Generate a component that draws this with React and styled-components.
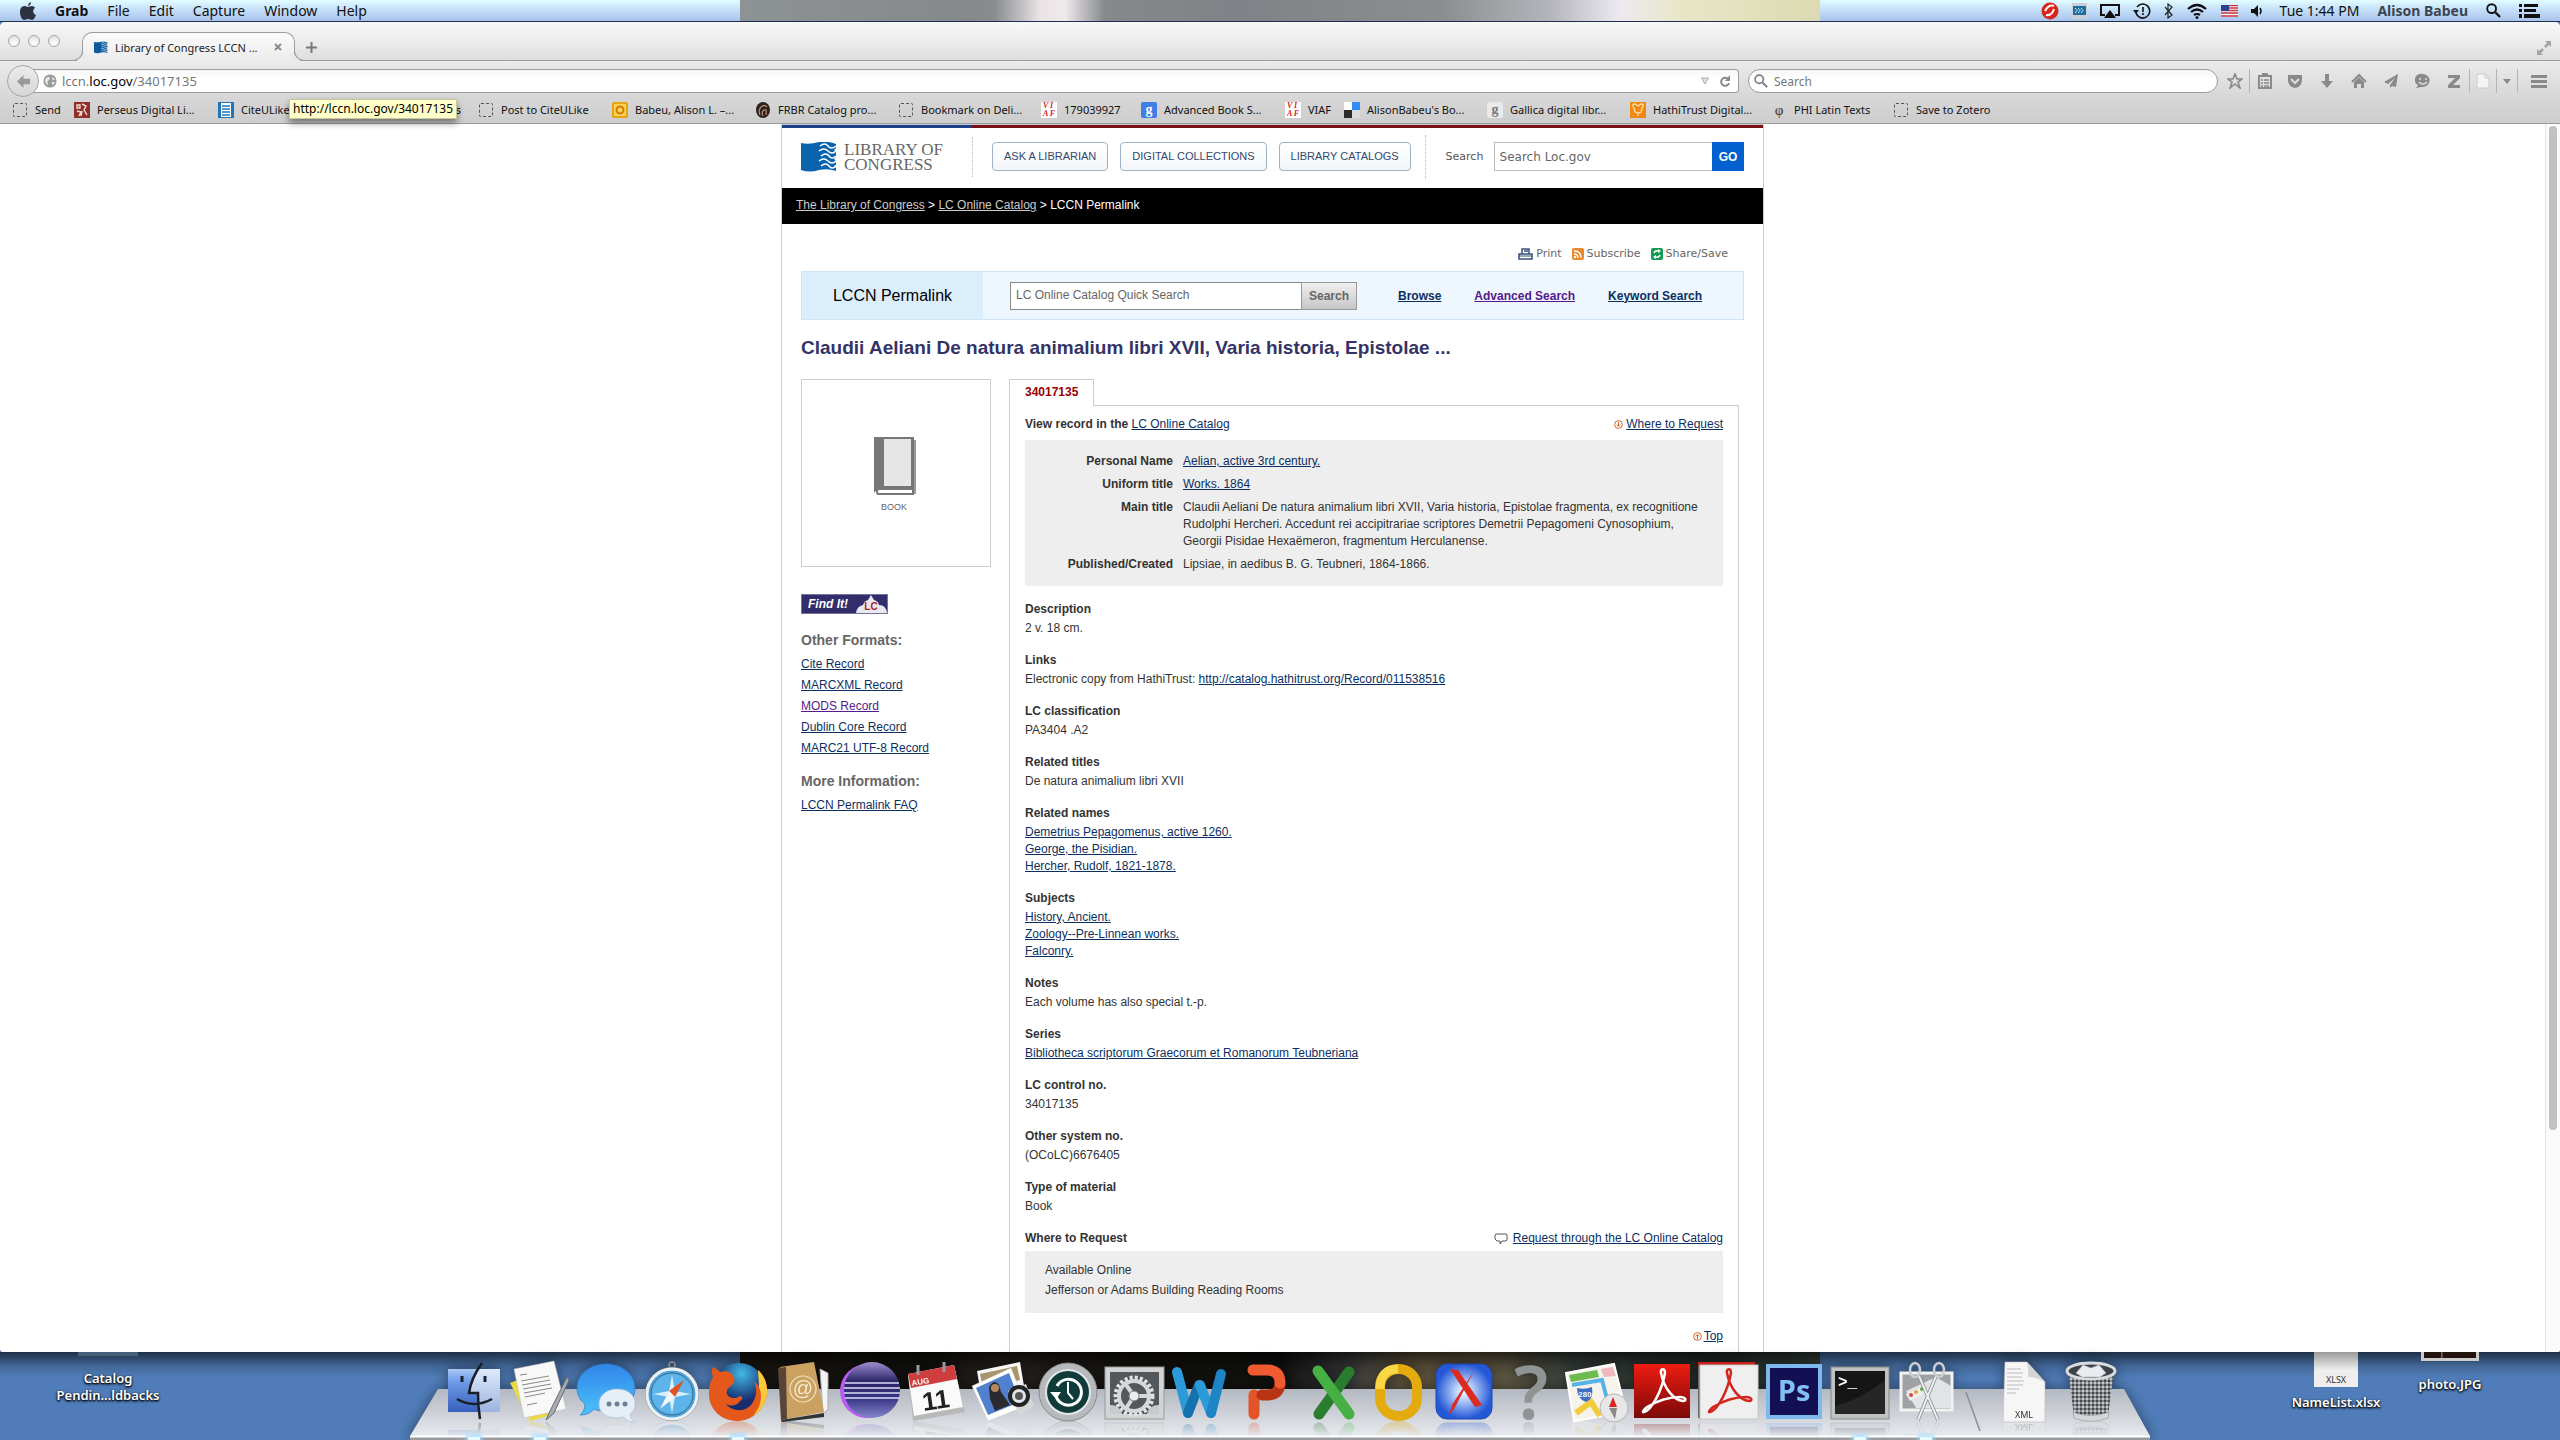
import React from "react";
import styled, { createGlobalStyle, css } from "styled-components";

const GlobalStyle = createGlobalStyle`
  *, *::before, *::after { box-sizing: border-box; }
  html, body, #root { margin: 0; padding: 0; height: 100%; }
  body { font-family: "Liberation Sans", Arial, sans-serif; font-size: 12px; color: #333; overflow: hidden; }
  button, input { font: inherit; }
  button { cursor: pointer; }
`;

const uiFont = `"Noto Sans", "Open Sans", sans-serif`;
const verdana = `"DejaVu Sans", Verdana, sans-serif`;

/* ---------- desktop ---------- */

const Screen = styled.div`
  display: flex;
  flex-direction: column;
  height: 100vh;
  background: #507db9;
`;

const MenuBar = styled.header`
  flex: none;
  display: flex;
  align-items: center;
  justify-content: space-between;
  height: 22px;
  padding: 0 20px;
  font-family: ${uiFont};
  font-size: 14px;
  line-height: 20px;
  color: #111;
  border-bottom: 1px solid #1d3050;
  background:
    linear-gradient(90deg, #8d9294 0, #85898b 230px, #8a8d90 255px, #e9e3e6 300px, #efe9ec 325px, #85898c 365px, #7f8387 500px, #8a8e90 700px, #b4b5bb 810px, #eceaf0 880px, #e9e6c8 940px, #dcdab2 1080px) center / 1080px 100% no-repeat,
    linear-gradient(#e2fdff, #c5e0fa 45%, #a9c3ea);
`;

const MenuGroup = styled.nav`
  display: flex;
  align-items: center;
  gap: ${(p) => p.$gap}px;
`;

const ClockGroup = styled.div`
  display: flex;
  align-items: center;
  gap: 18px;
  margin-left: 4px;
`;

const MenuItem = styled.button`
  border: 0;
  padding: 0;
  background: none;
  color: ${(p) => (p.$muted ? "#3b4650" : "#111")};
  font-weight: ${(p) => (p.$bold ? 700 : 400)};
  white-space: nowrap;
  display: flex;
  align-items: center;
`;

/* ---------- browser window ---------- */

const BrowserWindow = styled.main`
  flex: 1;
  min-height: 0;
  display: flex;
  flex-direction: column;
  background: #fff;
  border-radius: 5px 5px 3px 3px;
  overflow: hidden;
`;

const TabStrip = styled.div`
  flex: none;
  display: flex;
  align-items: flex-end;
  height: 39px;
  padding: 0 8px;
  background: linear-gradient(#f8f8f8, #ececec 50%, #dedede);
  border-bottom: 1px solid #9d9d9d;
`;

const Lights = styled.div`
  display: flex;
  gap: 8px;
  align-self: center;
  width: 74px;
`;

const Light = styled.button`
  width: 12px;
  height: 12px;
  padding: 0;
  border-radius: 50%;
  border: 1px solid #a8a8a8;
  background: radial-gradient(circle at 50% 80%, #fff, #dcdcdc);
`;

const Tab = styled.div`
  position: relative;
  display: flex;
  align-items: center;
  width: 213px;
  height: 29px;
  margin-bottom: -1px;
  padding: 0 12px 0 11px;
  gap: 7px;
  font-family: ${uiFont};
  font-size: 11px;
  color: #222;
  white-space: nowrap;
  background: linear-gradient(#fbfbfb, #ebebeb);
  border: 1px solid #9d9d9d;
  border-bottom: 0;
  border-radius: 10px 10px 0 0;
  &::before, &::after {
    content: "";
    position: absolute;
    bottom: 0;
    width: 10px;
    height: 10px;
    border-bottom: 1px solid #9d9d9d;
  }
  &::before { left: -10px; border-right: 1px solid #9d9d9d; border-bottom-right-radius: 10px; box-shadow: 4px 3px 0 #ebebeb; }
  &::after { right: -10px; border-left: 1px solid #9d9d9d; border-bottom-left-radius: 10px; box-shadow: -4px 3px 0 #ebebeb; }
`;

const GlyphButton = styled.button`
  display: flex;
  align-items: center;
  justify-content: center;
  flex: none;
  width: ${(p) => p.$w}px;
  height: 24px;
  padding: 0;
  border: 0;
  background: none;
  color: #8a8a8a;
  ${(p) => p.$line && css`border-left: 1px solid #b4b4b4;`}
  ${(p) => p.$push && css`margin-left: auto;`}
`;

const NewTab = styled(GlyphButton)`
  margin: 0 0 1px 10px;
`;

const Chrome = styled.div`
  flex: none;
  background: linear-gradient(#ebebeb, #d8d8d8 55%, #cdcdcd);
  border-bottom: 1px solid #9b9b9b;
`;

const NavRow = styled.div`
  display: flex;
  align-items: center;
  height: 40px;
  padding: 0 0 0 7px;
  font-family: ${uiFont};
`;

const BackButton = styled.button`
  position: relative;
  flex: none;
  display: flex;
  align-items: center;
  justify-content: center;
  width: 32px;
  height: 32px;
  margin-right: -8px;
  padding: 0;
  border-radius: 50%;
  border: 1px solid #a6a6a6;
  background: linear-gradient(#ececec, #d6d6d6);
  color: #9a9a9a;
  z-index: 1;
`;

const UrlField = styled.div`
  flex: 1;
  display: flex;
  align-items: center;
  height: 24px;
  padding: 0 6px 0 12px;
  gap: 5px;
  border: 1px solid #9c9c9c;
  border-left: 0;
  border-radius: 0 4px 4px 0;
  background: linear-gradient(#f6f6f6, #fff 40%);
  font-size: 13px;
  color: #777;
  b { font-weight: 400; color: #000; }
`;

const FlexText = styled.div`
  flex: 1;
`;

const SearchField = styled.label`
  display: flex;
  align-items: center;
  width: 470px;
  height: 24px;
  margin-left: 9px;
  padding: 0 8px 0 5px;
  gap: 6px;
  border: 1px solid #9c9c9c;
  border-radius: 12px;
  background: linear-gradient(#f6f6f6, #fff 40%);
  color: #808080;
  input {
    flex: 1;
    min-width: 0;
    border: 0;
    outline: 0;
    padding: 0;
    background: none;
    font-size: 12px;
  }
  input::placeholder { color: #777; opacity: 1; }
`;

const ToolSet = styled.div`
  display: flex;
  justify-content: flex-end;
  width: 342px;
`;

const Bookmarks = styled.nav`
  position: relative;
  display: flex;
  align-items: center;
  height: 22px;
  padding: 0 0 5px 12px;
  font-family: ${uiFont};
  font-size: 11px;
  line-height: 16px;
`;

const Bookmark = styled.a`
  flex: none;
  display: flex;
  align-items: center;
  gap: 7px;
  width: ${(p) => p.$w}px;
  color: #111;
  text-decoration: none;
  white-space: nowrap;
  ${(p) => p.$tail && css`justify-content: flex-end; padding-right: 17px;`}
`;

const Tooltip = styled.div`
  position: absolute;
  left: 289px;
  top: -2px;
  height: 20px;
  padding: 1px 3px;
  font-size: 12px;
  color: #000;
  background: #ffffc9;
  border: 1px solid #c9c79a;
  box-shadow: 0 4px 7px rgba(0, 0, 0, 0.45);
`;

const Dashed = styled.span`
  flex: none;
  width: 14px;
  height: 14px;
  margin: 0 1px;
  border: 1px dashed #555;
  border-radius: 2px;
`;

const Favicon = styled.span`
  flex: none;
  display: flex;
  align-items: center;
  justify-content: center;
  width: 16px;
  height: 16px;
  font: ${(p) => p.$font || "700 12px 'Liberation Serif', serif"};
  color: ${(p) => p.$fg || "#fff"};
  background: ${(p) => p.$bg || "transparent"};
  border-radius: ${(p) => p.$r || 0}px;
`;

const Viewport = styled.div`
  flex: 1;
  min-height: 0;
  display: flex;
`;

const PageArea = styled.div`
  flex: 1;
  overflow: hidden;
  display: flex;
  justify-content: center;
`;

const ScrollTrack = styled.div`
  flex: none;
  width: 15px;
  padding: 2px 3px;
  background: #fafafa;
  border-left: 1px solid #e4e4e4;
`;

const ScrollThumb = styled.div`
  height: 82%;
  border-radius: 4px;
  background: #c1c1c1;
`;

/* ---------- library page ---------- */

const Page = styled.div`
  width: 983px;
  border: solid #ccc;
  border-width: 0 1px;
`;

const FlagBar = styled.div`
  height: 4px;
  border-top: 1px solid #c3cbdb;
  background: linear-gradient(90deg, #1c3f86 190px, #7b1014 190px);
`;

const SiteHeader = styled.header`
  display: flex;
  align-items: center;
  height: 60px;
  padding: 0 19px 3px;
`;

const Logo = styled.a`
  display: flex;
  align-items: center;
  gap: 7px;
  width: 172px;
  height: 40px;
  border-right: 1px dotted #bbb;
  color: #666;
  text-decoration: none;
  white-space: nowrap;
  font: 17px/15px "Liberation Serif", serif;
`;

const HeaderButtons = styled.div`
  display: flex;
  gap: 12px;
  align-items: center;
  height: 44px;
  padding: 0 14px 0 19px;
  border-right: 1px dotted #bbb;
`;

const HeaderButton = styled.button`
  height: 29px;
  padding: 0 11px 2px;
  border: 1px solid #9fb0c8;
  border-radius: 4px;
  background: linear-gradient(#fff, #f3f6fa);
  color: #33496b;
  font-size: 11px;
  white-space: nowrap;
`;

const LocSearch = styled.form`
  flex: 1;
  display: flex;
  align-items: center;
  margin-left: 20px;
  font-family: ${verdana};
  font-size: 11px;
  color: #555;
  label { width: 48px; }
`;

const LocInput = styled.input`
  flex: 1;
  min-width: 0;
  height: 29px;
  padding: 0 5px;
  border: 1px solid #bbb;
  border-right: 0;
  font-size: 12px;
  &::placeholder { color: #666; opacity: 1; }
`;

const GoButton = styled.button`
  width: 32px;
  height: 29px;
  padding: 0;
  border: 0;
  background: #0060cf;
  color: #fff;
  font: 700 12px "Liberation Sans", sans-serif;
`;

const Crumbs = styled.nav`
  height: 36px;
  padding: 0 14px;
  background: #000;
  color: #fff;
  line-height: 35px;
  a { color: #ccc; }
`;

const UtilityRow = styled.div`
  display: flex;
  justify-content: flex-end;
  align-items: center;
  gap: 10px;
  height: 47px;
  padding: 12px 35px 0 0;
  font-family: ${verdana};
  font-size: 11px;
`;

const UtilityLink = styled.a`
  display: flex;
  align-items: center;
  gap: 3px;
  color: #666;
  text-decoration: none;
`;

const CatalogBar = styled.div`
  display: flex;
  align-items: center;
  height: 49px;
  margin: 0 19px;
  border: 1px solid #cfe5f6;
  background: #eef6ff;
`;

const CatalogName = styled.div`
  display: flex;
  align-items: center;
  justify-content: center;
  width: 181px;
  height: 100%;
  background: #dbeefc;
  color: #000;
  font-size: 16px;
`;

const QuickSearch = styled.form`
  display: flex;
  margin: 0 41px 0 27px;
`;

const QuickInput = styled.input`
  width: 292px;
  height: 28px;
  padding: 0 5px 2px;
  border: 1px solid #888;
  background: #fff;
  &::placeholder { color: #666; opacity: 1; }
`;

const QuickButton = styled.button`
  width: 56px;
  height: 28px;
  margin-left: -1px;
  padding: 0;
  border: 1px solid #999;
  background: linear-gradient(#f0f0f0, #c6c6c6);
  color: #666;
  font-weight: 700;
`;

const CatalogLinks = styled.div`
  display: flex;
  gap: 33px;
  font-weight: 700;
`;

const Link = styled.a`
  color: ${(p) => (p.$visited ? "#551a8b" : "#0b2f5f")};
  white-space: nowrap;
`;

const Title = styled.h1`
  margin: 16px 19px 19px;
  font-size: 19px;
  line-height: 24px;
  color: #333366;
`;

const Columns = styled.div`
  display: flex;
  align-items: flex-start;
  gap: 18px;
  margin: 0 24px 0 19px;
`;

const Side = styled.aside`
  width: 190px;
`;

const Cover = styled.div`
  display: flex;
  flex-direction: column;
  align-items: center;
  justify-content: center;
  gap: 5px;
  height: 188px;
  padding: 2px 4px 0 0;
  border: 1px solid #ccc;
  font-size: 9px;
  line-height: 12px;
  color: #666;
`;

const FindIt = styled.button`
  display: flex;
  justify-content: space-between;
  align-items: flex-end;
  width: 87px;
  height: 20px;
  margin: 27px 0 17px;
  padding: 0 0 0 6px;
  border: 1px solid #77739a;
  background: #312e6b;
  color: #fff;
  font: italic 700 12px/17px "Liberation Sans", sans-serif;
  white-space: nowrap;
`;

const SideTitle = styled.h2`
  margin: 0 0 5px;
  font-size: 14px;
  line-height: 18px;
  color: #666;
`;

const SideList = styled.ul`
  list-style: none;
  margin: 0 0 13px;
  padding: 0;
  line-height: 21px;
`;

const Record = styled.section`
  flex: 1;
  line-height: 17px;
`;

const RecordTab = styled.div`
  position: relative;
  width: 85px;
  height: 27px;
  margin-bottom: -1px;
  padding-left: 15px;
  border: 1px solid #ccc;
  border-bottom: 0;
  background: #fff;
  color: #900;
  font-weight: 700;
  line-height: 24px;
`;

const Panel = styled.div`
  min-height: 1200px;
  padding: 10px 15px;
  border: 1px solid #ccc;
`;

const Split = styled.div`
  display: flex;
  justify-content: space-between;
`;

const IconText = styled.span`
  display: flex;
  align-items: center;
  gap: ${(p) => p.$gap}px;
`;

const Summary = styled.dl`
  display: grid;
  grid-template-columns: 148px 1fr;
  gap: 6px 10px;
  margin: 7px 0 15px;
  padding: 13px 10px 13px 0;
  background: #eee;
  dt { font-weight: 700; text-align: right; }
  dd { margin: 0; }
`;

const Field = styled.div`
  margin-bottom: 15px;
  h3 { margin: 0 0 2px; font-size: 12px; }
`;

const Holdings = styled.div`
  margin: 4px 0 15px;
  padding: 9px 20px 13px;
  background: #eee;
  line-height: 20px;
`;

const TopLink = styled.div`
  display: flex;
  justify-content: flex-end;
`;

/* ---------- dock ---------- */

const Desk = styled.footer`
  position: relative;
  flex: none;
  display: flex;
  justify-content: center;
  align-items: flex-end;
  height: 88px;
  background:
    linear-gradient(rgba(0, 0, 0, 0.62), rgba(0, 0, 0, 0.18) 14px, transparent 26px),
    linear-gradient(90deg, #1b1813, #12110f 180px, #26231e 260px, #14120f 420px, #11110f 540px, #3a3c3e 610px, #5f553f 660px, #6b5d44 740px, #3b443f 830px, #27302c 960px, #3c4a42 1080px) center / 1080px 100% no-repeat,
    #507db9;
`;

const Dock = styled.div`
  position: relative;
  display: flex;
  justify-content: center;
  width: 1740px;
  height: 80px;
  padding-left: 5px;
  filter: drop-shadow(0 0 7px rgba(0, 0, 0, 0.45));
  &::before {
    content: "";
    position: absolute;
    inset: 29px 0 0 0;
    clip-path: polygon(28px 0, calc(100% - 26px) 0, 100% 47px, 100% 100%, 0 100%, 0 47px);
    background: linear-gradient(#b3b8c1, #c9ccd2 20px, #e6e9ee 46px, #fff 47px, #fff 48px, #989a9d 49px);
  }
`;

const DockItem = styled.button`
  position: relative;
  display: flex;
  width: 66px;
  height: 80px;
  padding: 1px 3px 0;
  border: 0;
  background: none;
  svg {
    width: 60px;
    height: 60px;
    overflow: visible;
    -webkit-box-reflect: below 0 linear-gradient(transparent 74%, rgba(0, 0, 0, 0.32));
  }
  ${(p) => p.$running && css`
    &::after {
      content: "";
      position: absolute;
      left: 27px;
      bottom: 0;
      width: 12px;
      height: 3px;
      background: #e9fbff;
      box-shadow: 0 0 4px 2px #9fdcff;
    }
  `}
`;

const DockDivider = styled.div`
  position: relative;
  width: 33px;
  height: 80px;
  padding: 32px 0 0 6px;
`;

const DeskFile = styled.a`
  position: absolute;
  top: 0;
  ${(p) => p.$side}: ${(p) => p.$at}px;
  display: flex;
  flex-direction: column;
  align-items: center;
  width: 120px;
  gap: ${(p) => p.$gap}px;
  color: #fff;
  font: 600 13px/17px ${uiFont};
  text-align: center;
  text-decoration: none;
  text-shadow: 0 1px 3px #000, 0 1px 2px #000;
`;

const FolderEdge = styled.span`
  width: 60px;
  height: 5px;
  background: #47607a;
  border-bottom: 1px solid #2e4157;
`;

const SheetEdge = styled.span`
  width: 44px;
  height: 35px;
  padding-top: 21px;
  background: linear-gradient(#9a9a9a, #eee 18px);
  color: #333;
  font: 9px/14px ${uiFont};
  text-shadow: none;
`;

const PhotoEdge = styled.span`
  width: 58px;
  height: 9px;
  border: solid #ccc;
  border-width: 0 3px 3px;
  background: linear-gradient(90deg, #22130e 32%, #877 34%, #22130e 37%);
`;

/* ---------- drawings ---------- */

const S = ({ s = 16, w, h, vb = "0 0 16 16", children, ...r }) => (
  <svg width={w || s} height={h || s} viewBox={vb} fill="none" aria-hidden="true" {...r}>{children}</svg>
);

const Wave = ({ w = 14, h = 13, c = "#0b5a9d" }) => (
  <S w={w} h={h} vb="0 0 36 30">
    <path d="M0 1q8 2 18-1q10-1 17 2v27q-8-3-17-1q-9 3-18 0z" fill={c} />
    <path d="M19 4q5-4 8 0t8 0M18 9q5-4 9 0t8 0M20 14q5-4 8 0t7 0M18 19q5-4 9 0t8 0M20 24q5-4 8 0t7 0" stroke="#fff" strokeWidth="1.5" />
    <path d="M36 5l-3 3 3 3M36 14l-3 3 3 3M36 22l-3 2 3 3" fill="#fff" />
  </S>
);

const Apple = () => (
  <S w={16} h={18} vb="0 0 16 18">
    <path d="M11 0q0 3-3 4q0-3 3-4zM8 5c1 0 2-1 4-1 1 0 3 1 3 2-3 2-2 6 1 7-1 3-3 5-4 5s-2-1-4-1-2 1-4 1C2 18 0 14 0 10s2-6 5-6c1 0 2 1 3 1z" fill="#2c3240" />
  </S>
);

const Magnifier = ({ s = 14 }) => (
  <S s={s}><circle cx="6" cy="6" r="4.7" stroke="currentColor" strokeWidth="2" /><path d="M10 10l5 5" stroke="currentColor" strokeWidth="2.4" /></S>
);

const Viaf = () => (
  <Favicon $bg="#fff" $fg="#d3222a" $font="italic 700 8px/8px 'Liberation Serif', serif"><span>V I<br />A F</span></Favicon>
);

const bookmarkIcons = {
  dash: <Dashed />,
  perseus: <Favicon $bg="#8f2f2b"><S><path d="M3 3h3v3H3zM8 2l4 2-2 4 3 5M3 9l4 1-2 4M8 9l-1 5" stroke="#f3dcd4" strokeWidth="1.4" /></S></Favicon>,
  cite: <Favicon $bg="#1f75bb"><S><path d="M3 1h10v14H3z" fill="#fff" /><path d="M4 4h8M4 7h8M4 10h8M4 13h8" stroke="#1f75bb" strokeWidth="1.3" /></S></Favicon>,
  owa: <Favicon $bg="#e9a40c" $r={2}><S><rect x="2" y="2" width="12" height="12" fill="#fbd25a" /><circle cx="8" cy="8" r="3.5" stroke="#d07c00" strokeWidth="2" /></S></Favicon>,
  frbr: <S><ellipse cx="8" cy="8" rx="7" ry="8" fill="#2d211b" /><path d="M5 13q-2-5 1-8t6 0M8 14q-2-4 1-6t2 5" stroke="#b08a70" strokeWidth="1.3" /></S>,
  viaf: <Viaf />,
  goog: <Favicon $bg="#3f7de8" $r={2} $font="700 14px/12px 'Liberation Serif', serif">g</Favicon>,
  del: <S><path d="M0 0h8v8H0z" fill="#fff" /><path d="M8 0h8v8H8z" fill="#2f8ef5" /><path d="M0 8h8v8H0z" fill="#2b2b2b" /><path d="M8 8h8v8H8z" fill="#ddd" /></S>,
  gal: <Favicon $bg="#e8eaec" $fg="#777" $r={3} $font="700 14px/12px 'Liberation Serif', serif">g</Favicon>,
  hathi: <Favicon $bg="#f08a12"><S><path d="M4 6q-3-4 1-4l3 2 3-2q4 0 1 4l-1 4-3 1-3-1zM8 11v3" stroke="#ffe0a8" strokeWidth="1.3" /></S></Favicon>,
  phi: <Favicon $fg="#333" $font="15px/14px 'Liberation Serif', serif">φ</Favicon>,
};

const bookmarks = [
  ["dash", "Send", 62],
  ["perseus", "Perseus Digital Li...", 144],
  ["cite", "CiteULike", 94],
  [null, "s", 166],
  ["dash", "Post to CiteULike", 134],
  ["owa", "Babeu, Alison L. –...", 143],
  ["frbr", "FRBR Catalog pro...", 143],
  ["dash", "Bookmark on Deli...", 143],
  ["viaf", "179039927", 100],
  ["goog", "Advanced Book S...", 144],
  ["viaf", "VIAF", 59],
  ["del", "AlisonBabeu's Bo...", 143],
  ["gal", "Gallica digital libr...", 143],
  ["hathi", "HathiTrust Digital...", 141],
  ["phi", "PHI Latin Texts", 122],
  ["dash", "Save to Zotero", 110],
];

const tools = [
  ["Bookmark this page", 28, false, <S><path d="M8 1l2 5h5l-4 3 2 6-5-4-5 4 2-6-4-3h5z" stroke="currentColor" strokeWidth="1.6" /></S>],
  ["Show bookmarks", 30, true, <S><path d="M2 3h12v12H2z" stroke="currentColor" strokeWidth="2" /><path d="M5 0h6v4H5z" fill="currentColor" /><path d="M4 7h2M7 7h5M4 10h2M7 10h5M4 13h2M7 13h5" stroke="currentColor" strokeWidth="1.3" /></S>],
  ["Pocket", 32, false, <S><path d="M1 2h14v6q-1 6-7 7-6-1-7-7z" fill="currentColor" /><path d="M4 6l4 4 4-4" stroke="#ddd" strokeWidth="2" /></S>],
  ["Downloads", 32, false, <S><path d="M6 1h4v7h4l-6 7-6-7h4z" fill="currentColor" /></S>],
  ["Home", 32, false, <S><path d="M1 9l7-7 7 7" stroke="currentColor" strokeWidth="2" /><path d="M3 9l5-5 5 5v6h-3v-4H6v4H3z" fill="currentColor" /></S>],
  ["Share", 32, false, <S><path d="M15 1L1 9l4 2 7-6-5 7v3l2-2 4 1z" fill="currentColor" /></S>],
  ["Hello", 32, false, <S><path d="M8 1a7 6 0 1 1-2 13l-5 1 2-3a7 6 0 0 1 5-11z" fill="currentColor" /><path d="M5 5v2M11 5v2M4 9q4 4 8 0" stroke="#ddd" strokeWidth="1.5" /></S>],
  ["Zotero", 30, false, <S><path d="M2 2h12v3L7 12h7v3H2v-3l7-7H2z" fill="currentColor" /></S>],
  ["Save page", 27, true, <S><path d="M2 1h8l4 4v10H2z" fill="#f4f4f4" stroke="#ccc" /><path d="M10 1v4h4" stroke="#ccc" /></S>],
  ["Save options", 21, true, <S s={8} vb="0 0 8 8"><path d="M0 2h8L4 7z" fill="currentColor" /></S>],
  ["Open menu", 43, true, <S><path d="M0 2h16v3H0zM0 7h16v3H0zM0 12h16v3H0z" fill="currentColor" /></S>],
];

const statusIcons = [
  <S s={18} vb="0 0 18 18"><circle cx="9" cy="9" r="8.5" fill="#d8261c" /><path d="M4 9q4-7 9-5M5 13q6 1 8-6" stroke="#fff" strokeWidth="2" /></S>,
  <S w={15} h={16} vb="0 0 15 16"><rect width="15" height="16" fill="#c8d0d6" /><rect x="1" y="3" width="13" height="9" fill="#1e6c9e" /><path d="M3 5l2 2.5L3 10M6 5l2 2.5L6 10M9 5l2 2.5L9 10" stroke="#bfe4ff" /></S>,
  <S w={20} h={16} vb="0 0 20 16"><path d="M5 12H1V2h18v10h-4" stroke="#111" strokeWidth="2" /><path d="M10 7l6 8H4z" fill="#111" /></S>,
  <S s={18} vb="0 0 18 18"><path d="M4 5a7 7 0 1 1-1 6" stroke="#111" strokeWidth="1.6" /><path d="M0 8h6l-3 4z" fill="#111" /><path d="M10 5v5M10 11v2" stroke="#111" strokeWidth="1.6" /></S>,
  <S w={9} h={16} vb="0 0 9 16"><path d="M1 4l7 8-4 3V1l4 3-7 8" stroke="#222" strokeWidth="1.2" /></S>,
  <S w={22} h={16} vb="0 0 22 16"><path d="M2 6q9-8 18 0M5 9q6-5 12 0M8 12q3-2 6 0" stroke="#111" strokeWidth="2.2" /><circle cx="11" cy="14.5" r="1.5" fill="#111" /></S>,
  <S w={17} h={12} vb="0 0 17 12"><rect width="17" height="12" fill="#fff" /><path d="M0 .5h17M0 3h17M0 5.5h17M0 8h17M0 11h17" stroke="#c4303a" strokeWidth="1.3" /><rect width="8" height="6" fill="#31408c" /></S>,
  <S w={12} h={12} vb="0 0 12 12"><path d="M0 4h3l4-4v12L3 8H0z" fill="#111" /><path d="M9 3q2 3 0 6" stroke="#111" strokeWidth="1.5" /></S>,
];

const CircleArrow = ({ up }) => (
  <S w={9} h={9} vb="0 0 10 10"><circle cx="5" cy="5" r="4.3" stroke="#c8581e" /><path d={up ? "M5 8V3M3 5l2-2 2 2" : "M5 2v5M3 5l2 2 2-2"} stroke="#c8581e" /></S>
);

const swirl = "M12 51c8-2 18-22 21-39 0-5-5-5-4 0 3 16 13 27 22 28 4 0 3-4-3-4-12 0-23 4-33 10-4 3-5 6-3 5z";

const dockApps = [
  ["Finder", true, <>
    <defs><linearGradient id="fi" x2="0" y2="1"><stop stopColor="#a9c8f7" /><stop offset=".3" stopColor="#6f9ae6" /><stop offset="1" stopColor="#3560bd" /></linearGradient><linearGradient id="fr" x2="0" y2="1"><stop stopColor="#dfe9fb" /><stop offset="1" stopColor="#9db4e0" /></linearGradient></defs>
    <rect x="4" y="8" width="52" height="43" fill="url(#fr)" /><path d="M4 8h32q-9 13-10 24h9v19H4z" fill="url(#fi)" />
    <path d="M18 15v6M41 15v6" stroke="#152238" strokeWidth="3" /><path d="M38 2q-11 15-13 30h9q0 14 2 26M13 38q17 10 35 0" stroke="#1b2026" strokeWidth="2.5" /></>],
  ["TextEdit", true, <>
    <path d="M0 22l20 38 20-6L10 18z" fill="#ecd93c" /><path d="M4 8l40-8 12 48-42 9z" fill="#f8f8f8" stroke="#bbb" strokeWidth=".5" />
    <path d="M10 14l7-1M11 20l28-5M12 24l28-5M13 28l28-5M14 32l28-5M15 36l20-4M17 44l10-2" stroke="#888" /><path d="M57 16L40 50l-4 9 8-7 15-33z" fill="#a9adb2" stroke="#66696d" /></>],
  ["Messages", false, <>
    <defs><linearGradient id="ms" x2="0" y2="1"><stop stopColor="#2f86e8" /><stop offset="1" stopColor="#4cc2fb" /></linearGradient></defs>
    <path d="M30 3c16 0 29 10 29 24S46 50 30 50c-5 0-8 0-12-2q-5 6-14 6 5-4 5-11C4 39 1 34 1 27 1 13 14 3 30 3z" fill="url(#ms)" stroke="#2a74c4" strokeWidth=".7" />
    <path d="M41 28c11 0 18 6 18 15 0 5-2 8-5 10 0 4 2 6 5 8-6 0-9-2-11-5-16 3-25-3-25-13 0-9 8-15 18-15z" fill="#e6eff8" stroke="#a9bccd" strokeWidth=".6" /><g fill="#6d7f90"><circle cx="33" cy="43" r="2.5" /><circle cx="41" cy="43" r="2.5" /><circle cx="49" cy="43" r="2.5" /></g></>],
  ["Safari", false, <>
    <circle cx="30" cy="4" r="3" stroke="#888" strokeWidth="1.5" /><circle cx="30" cy="33" r="27" fill="#8a9097" /><circle cx="30" cy="33" r="25" stroke="#eef0f2" strokeWidth="3" fill="#4aa5e0" /><circle cx="30" cy="33" r="21" fill="#5db4ea" stroke="#406880" />
    <path d="M30 14l3 16 16 3-16 3-3 16-3-16-16-3 16-3z" fill="#d9eefb" /><path d="M42 19L33 36l-6-6z" fill="#e2521f" /><path d="M18 48l9-18 6 6z" fill="#f4f8fb" /></>],
  ["Firefox", true, <>
    <defs><radialGradient id="ff" cx=".55" cy=".2"><stop stopColor="#43b9e6" /><stop offset="1" stopColor="#152d6e" /></radialGradient></defs>
    <circle cx="31" cy="29" r="27" fill="url(#ff)" /><path d="M50 9c9 8 12 22 6 34-5 10-15 17-27 17C12 60 0 47 1 31 1 22 4 19 5 15 3 12 4 8 5 6c3 1 5 3 7 5 5-2 12 0 13 4 3 4 1 8-2 10-3 2-5 4-4 8 2 5 9 5 13 2 3 0 3 4 0 5-4 6-11 5-14 3 6 8 21 9 27-2 4-7 4-15 1-20 3 1 4 3 5 5 1-6 0-12-1-17z" fill="#e4591b" /><path d="M50 9c9 8 12 22 6 34-2 4-6 9-11 12 8-9 10-20 6-29 0-7-1-12-1-17z" fill="#fbc93a" /></>],
  ["Contacts", false, <>
    <path d="M46 8l8 4v36l-5 5z" fill="#f4f4f4" stroke="#aaa" /><path d="M6 6l34-5 10 50-43 8z" fill="#caa161" /><path d="M4 7l8-1 1 52-6 1z" fill="#5a4438" /><path d="M7 59l43-7v4L8 61z" fill="#333" /><circle cx="29" cy="28" r="13" stroke="#f1e1bd" strokeWidth="1.2" /><text x="29" y="34" fontFamily="Liberation Sans" fontSize="20" fill="#f6ead0" textAnchor="middle">@</text></>],
  ["Eclipse", false, <>
    <defs><linearGradient id="ec" x2="0" y2="1"><stop stopColor="#9d8ed0" /><stop offset=".35" stopColor="#2b2468" /><stop offset=".65" stopColor="#3a3585" /><stop offset="1" stopColor="#8486cc" /></linearGradient></defs>
    <circle cx="27" cy="30" r="27" fill="#b95cf0" /><circle cx="32" cy="29" r="28" fill="url(#ec)" /><path d="M5 22h54M4 27h56M4 32h56M5 37h54" stroke="#dfe0f6" strokeWidth="1.3" /></>],
  ["Calendar", false, <>
    <path d="M2 14l46-9 11 46-52 9z" fill="#b8b8b8" /><path d="M2 13l46-9 9 42-49 9z" fill="#fafafa" /><path d="M2 13l46-9 3 14-46 9z" fill="#cf3e3e" /><path d="M12 4v10M38 1v10" stroke="#999" strokeWidth="3" />
    <text x="6" y="25" transform="rotate(-10 6 25)" fontFamily="Liberation Sans" fontWeight="700" fontSize="8" fill="#fff">AUG</text><text x="31" y="48" transform="rotate(-8 31 48)" fontFamily="Liberation Sans" fontWeight="700" fontSize="26" textAnchor="middle" fill="#222">11</text></>],
  ["iPhoto", false, <>
    <path d="M5 10l43-9 6 36-43 8z" fill="#f6f6f6" /><path d="M8 13l37-8 3 14-37 8z" fill="#a8946a" /><path d="M0 25l39-18 15 38-38 15z" fill="#fff" stroke="#ccc" strokeWidth=".5" /><path d="M4 27l33-15 11 29-32 13z" fill="#4f81cf" /><path d="M17 26q5-9 10-2l2 7 9 13-15 6-5-12z" fill="#2b2a30" /><circle cx="23" cy="27" r="4" fill="#b98662" />
    <path d="M36 30l18-7 8 22-14 10z" fill="#d4d6d8" /><circle cx="47" cy="35" r="11" fill="#222" /><circle cx="47" cy="35" r="7" fill="#dfe4e8" /><circle cx="47" cy="35" r="4" fill="#555" /></>],
  ["Time Machine", false, <>
    <circle cx="30" cy="31" r="29" fill="#b7babd" stroke="#888" /><circle cx="30" cy="31" r="22" fill="#0f3c3a" stroke="#e4e6e8" strokeWidth="2" /><path d="M18 35a13 13 0 1 0 1-10" stroke="#fff" strokeWidth="3" /><path d="M12 31h11l-5 7z" fill="#fff" /><path d="M30 21v11l5 6" stroke="#fff" strokeWidth="2" /></>],
  ["System Preferences", false, <>
    <rect x="1" y="6" width="59" height="52" fill="#d2d3d4" stroke="#9a9a9a" /><rect x="6" y="11" width="49" height="42" fill="#55585a" />
    <circle cx="30" cy="35" r="18" stroke="#e1e2e3" strokeWidth="5" strokeDasharray="3 2" /><circle cx="30" cy="35" r="15" stroke="#d6d7d8" strokeWidth="4" /><path d="M30 35L20 21M30 35h17M30 35L21 49" stroke="#d6d7d8" strokeWidth="4" /><circle cx="30" cy="35" r="5" fill="#ececec" stroke="#777" /><path d="M6 44q10 0 12 9H6zM55 44q-10 0-12 9h12z" fill="#c9cacc" /></>],
  ["Word", false, <g strokeLinecap="round" strokeLinejoin="round" strokeWidth="10"><path d="M7 11l11 41" stroke="#2a9ad8" /><path d="M18 52l11-28" stroke="#1672ae" /><path d="M30 24l11 28" stroke="#2a9ad8" /><path d="M41 52l10-39" stroke="#1d84c6" /></g>],
  ["PowerPoint", false, <g strokeLinecap="round" strokeWidth="11"><path d="M18 53V34" stroke="#e4542b" /><path d="M26 34c14 1 17-4 18-10" stroke="#b93415" /><path d="M17 9h14q13 0 13 13" stroke="#ef5a30" /></g>],
  ["Excel", false, <g strokeLinecap="round" strokeWidth="11"><path d="M47 11L17 53" stroke="#2a7d2e" /><path d="M16 10l31 43" stroke="#46b045" /></g>],
  ["Outlook", false, <><rect x="12" y="8" width="37" height="47" rx="18" stroke="#e3ab0d" strokeWidth="10" /><path d="M12 28q0-20 18-20" stroke="#f9d743" strokeWidth="9" /></>],
  ["X11", false, <>
    <defs><radialGradient id="xx"><stop stopColor="#f3f8ff" /><stop offset=".3" stopColor="#bcd2fb" /><stop offset="1" stopColor="#2458d6" /></radialGradient></defs>
    <rect x="2" y="3" width="56" height="55" rx="11" fill="url(#xx)" stroke="#1c46b0" /><path d="M16 8l8 1 24 35-7 2zM40 10L20 48l-5 6 3-10z" fill="#dd2b20" /></>],
  ["Unknown application", false, <text x="31" y="58" fontFamily="Noto Sans" fontWeight="600" fontSize="74" textAnchor="middle" fill="#909495">?</text>],
  ["Maps", false, <>
    <path d="M0 12l48-9 12 48-52 9z" fill="#f5f3ea" stroke="#fff" strokeWidth="2" /><path d="M3 14l28-5 2 7-28 5z" fill="#6cbb4f" /><path d="M35 8l12-2 3 9-12 1z" fill="#f0b7c0" /><path d="M6 24l30-5 9 34" stroke="#58b2ea" strokeWidth="4" /><path d="M10 52l15-11 9 14" stroke="#f3cc3e" strokeWidth="6" /><path d="M11 27q8 2 15-1 2 12-6 15-9-3-9-14z" fill="#3e6fc0" /><text x="19" y="36" fontFamily="Liberation Sans" fontSize="8" fontWeight="700" fill="#fff" textAnchor="middle">280</text>
    <circle cx="48" cy="47" r="14" fill="#e7e7e7" stroke="#b5b5b5" /><path d="M47 36l4 10h-8z" fill="#d22" /><path d="M43 47h8l-2 11z" fill="#888" /></>],
  ["Acrobat", false, <><defs><linearGradient id="ac" x2="0" y2="1"><stop stopColor="#ee1c12" /><stop offset="1" stopColor="#7c0a08" /></linearGradient></defs><rect x="2" y="3" width="56" height="54" fill="url(#ac)" /><path d={swirl} stroke="#fff" strokeWidth="2.5" /></>],
  ["Acrobat Distiller", false, <><path d="M0 1h57v4H3v54l-3-3z" fill="#c92019" /><path d="M0 5h2v52H0z" fill="#666" /><rect x="2" y="4" width="58" height="54" fill="#efefef" stroke="#c8c8c8" /><path d={swirl} stroke="#d3261c" strokeWidth="2.5" /></>],
  ["Photoshop", false, <><rect x="2" y="3" width="56" height="55" fill="#7eb8ee" /><rect x="6" y="7" width="48" height="47" fill="#120f52" /><text x="30" y="40" fontFamily="Open Sans" fontWeight="700" fontSize="29" textAnchor="middle" fill="#82bff5">Ps</text></>],
  ["Terminal", true, <><rect x="1" y="6" width="58" height="52" fill="#bfc1c2" stroke="#888" /><rect x="5" y="10" width="50" height="43" fill="#151515" /><path d="M5 45q25-6 50-26v34H5z" fill="#262626" /><text x="8" y="26" fontFamily="Liberation Mono" fontWeight="700" fontSize="16" fill="#fff">&gt;_</text></>],
  ["Grab", true, <><rect x="5" y="12" width="51" height="37" fill="#9fa1a3" stroke="#f2f2f2" strokeWidth="3" /><path d="M10 30l30-14 15 9v22H20z" fill="#e2e3e5" /><path d="M10 33l19-9 3 6-18 10z" fill="#eee" /><circle cx="15" cy="34" r="2" fill="#d44" /><circle cx="20" cy="31" r="2" fill="#e9a23c" /><circle cx="26" cy="28" r="2" fill="#58a84a" />
    <path d="M23 15l19 44M40 15L22 59" stroke="#85888c" strokeWidth="3.5" /><path d="M23 15l19 44M40 15L22 59" stroke="#eceff1" strokeWidth="2" /><ellipse cx="19" cy="9" rx="5" ry="7" stroke="#c9ccd0" strokeWidth="2.5" /><ellipse cx="43" cy="9" rx="5" ry="7" stroke="#c9ccd0" strokeWidth="2.5" /></>],
];

const dockFiles = [
  ["XML document", <><path d="M10 1h22l18 20v40H8z" fill="#f6f6f6" stroke="#bbb" strokeWidth=".6" /><path d="M32 1q2 12 1 15 8 0 17 5z" fill="#d4d4d4" /><path d="M12 8h14M12 12h16M12 16h15M12 20h17M12 24h16M12 28h12M12 32h9" stroke="#bbb" /><text x="29" y="57" fontFamily="Noto Sans" fontSize="9" textAnchor="middle" fill="#333">XML</text></>],
  ["Trash", <><defs><pattern id="mesh" width="4" height="4" patternUnits="userSpaceOnUse"><rect width="4" height="4" fill="#46494c" /><path d="M0 2l2-2 2 2-2 2z" fill="#c4c7ca" /></pattern></defs>
    <path d="M7 9h46l-6 46q-17 9-34 0z" fill="url(#mesh)" /><path d="M12 51q17 7 36 0l-1 6q-17 7-34 0z" fill="#d3d6d9" stroke="#888" strokeWidth=".5" /><ellipse cx="30" cy="10" rx="24" ry="8" fill="#3e434a" stroke="#d9dcdf" strokeWidth="3" /><path d="M15 12l7-8 8 3 8-3 7 8-6 4H21z" fill="#e9ecef" stroke="#adb2b6" strokeWidth=".6" /></>],
];

/* ---------- record data ---------- */

const A = ({ children, ...r }) => <Link href="#" {...r}>{children}</Link>;

const fields = [
  ["Description", ["2 v. 18 cm."]],
  ["Links", [<>Electronic copy from HathiTrust: <A>http://catalog.hathitrust.org/Record/011538516</A></>]],
  ["LC classification", ["PA3404 .A2"]],
  ["Related titles", ["De natura animalium libri XVII"]],
  ["Related names", [<A>Demetrius Pepagomenus, active 1260.</A>, <A>George, the Pisidian.</A>, <A>Hercher, Rudolf, 1821-1878.</A>]],
  ["Subjects", [<A>History, Ancient.</A>, <A>Zoology--Pre-Linnean works.</A>, <A>Falconry.</A>]],
  ["Notes", ["Each volume has also special t.-p."]],
  ["Series", [<A>Bibliotheca scriptorum Graecorum et Romanorum Teubneriana</A>]],
  ["LC control no.", ["34017135"]],
  ["Other system no.", ["(OCoLC)6676405"]],
  ["Type of material", ["Book"]],
];

function SystemMenu() {
  return (
    <MenuBar>
      <MenuGroup $gap={19}>
        <MenuItem aria-label="Apple menu"><Apple /></MenuItem>
        <MenuItem $bold>Grab</MenuItem>
        {["File", "Edit", "Capture", "Window", "Help"].map((t) => <MenuItem key={t}>{t}</MenuItem>)}
      </MenuGroup>
      <MenuGroup $gap={13}>
        {statusIcons.map((icon, i) => <MenuItem key={i} aria-label={`Status ${i + 1}`}>{icon}</MenuItem>)}
        <ClockGroup>
          <MenuItem>Tue 1:44 PM</MenuItem>
          <MenuItem $bold $muted>Alison Babeu</MenuItem>
          <MenuItem aria-label="Spotlight"><Magnifier s={15} /></MenuItem>
          <MenuItem aria-label="Notifications"><S w={21} h={14} vb="0 0 21 14"><path d="M0 0h3v3H0zM5 0h14v3H5zM0 5h3v3H0zM5 5h12v3H5zM0 10h3v4H0zM5 10h16v4H5z" fill="#111" /></S></MenuItem>
        </ClockGroup>
      </MenuGroup>
    </MenuBar>
  );
}

function BrowserChrome() {
  return (
    <>
      <TabStrip>
        <Lights><Light aria-label="Close" /><Light aria-label="Minimize" /><Light aria-label="Zoom" /></Lights>
        <Tab>
          <Wave />
          <FlexText>Library of Congress LCCN ...</FlexText>
          <GlyphButton $w={8} aria-label="Close tab"><S s={8} vb="0 0 8 8"><path d="M1 1l6 6M7 1L1 7" stroke="currentColor" strokeWidth="2" /></S></GlyphButton>
        </Tab>
        <NewTab $w={12} aria-label="New tab"><S s={11} vb="0 0 11 11"><path d="M5.5 0v11M0 5.5h11" stroke="#777" strokeWidth="2" /></S></NewTab>
        <GlyphButton $w={16} $push aria-label="Full screen"><S s={14} vb="0 0 14 14"><path d="M8 0h6v6l-2-2-3 3-2-2 3-3zM6 14H0V8l2 2 3-3 2 2-3 3z" fill="#a3a3a3" /></S></GlyphButton>
      </TabStrip>
      <Chrome>
        <NavRow>
          <BackButton aria-label="Back"><S s={15}><path d="M8 1L1 8l7 7v-4h7V5H8z" fill="currentColor" /></S></BackButton>
          <UrlField>
            <S s={14}><circle cx="8" cy="8" r="7.5" fill="#9a9a9a" /><path d="M3 5q4-4 5 0l-3 4 1 4q-5-3-3-8zM10 3l4 3-3 1zM10 9l4 0-3 4z" fill="#e9e9e9" /></S>
            <FlexText role="textbox" aria-label="Address">lccn.<b>loc.gov</b>/34017135</FlexText>
            <GlyphButton $w={16} aria-label="History"><S s={8} vb="0 0 8 8"><path d="M.5 1h7L4 7z" stroke="#aaa" fill="#e4e4e4" /></S></GlyphButton>
            <GlyphButton $w={14} aria-label="Reload"><S s={12} vb="0 0 12 12"><path d="M9 4a4 4 0 1 0 1 4" stroke="currentColor" strokeWidth="2" /><path d="M11 0v6H6z" fill="currentColor" /></S></GlyphButton>
          </UrlField>
          <SearchField><Magnifier /><input type="text" placeholder="Search" aria-label="Search the web" /></SearchField>
          <ToolSet>
            {tools.map(([name, w, line, icon]) => (
              <GlyphButton key={name} $w={w} $line={line} aria-label={name}>{icon}</GlyphButton>
            ))}
          </ToolSet>
        </NavRow>
        <Bookmarks>
          {bookmarks.map(([icon, text, w], i) => (
            <Bookmark key={i} href="#" $w={w} $tail={!icon}>{icon && bookmarkIcons[icon]}{text}</Bookmark>
          ))}
          <Tooltip role="tooltip">http://lccn.loc.gov/34017135</Tooltip>
        </Bookmarks>
      </Chrome>
    </>
  );
}

function Sidebar() {
  return (
    <Side>
      <Cover>
        <S w={44} h={60} vb="0 0 44 60">
          <path d="M2 1h40v54H5q-3 0-3 3z" fill="#777" /><path d="M12 3h27v47H12z" fill="#e6e6e6" /><path d="M6 53h35v5H6q-2-2 0-5z" fill="#fff" stroke="#777" strokeWidth="2" /><path d="M43 4v54" stroke="#999" strokeWidth="2" />
        </S>
        BOOK
      </Cover>
      <FindIt>Find It!
        <S w={31} h={18} vb="0 0 31 18"><path d="M0 18q1-7 7-8 1-4 5-5l3-5 3 5q4 1 5 5 7 0 8 8z" fill="#e9e8f2" /><text x="15" y="15" fontFamily="Liberation Sans" fontStyle="normal" fontWeight="700" fontSize="10" textAnchor="middle" fill="#b3202a">LC</text></S>
      </FindIt>
      <SideTitle>Other Formats:</SideTitle>
      <SideList>
        <li><A>Cite Record</A></li>
        <li><A>MARCXML Record</A></li>
        <li><A $visited>MODS Record</A></li>
        <li><A>Dublin Core Record</A></li>
        <li><A>MARC21 UTF-8 Record</A></li>
      </SideList>
      <SideTitle>More Information:</SideTitle>
      <SideList><li><A>LCCN Permalink FAQ</A></li></SideList>
    </Side>
  );
}

function RecordView() {
  return (
    <Record>
      <RecordTab>34017135</RecordTab>
      <Panel>
        <Split>
          <span><b>View record in the</b> <A>LC Online Catalog</A></span>
          <IconText $gap={3}><CircleArrow /><A>Where to Request</A></IconText>
        </Split>
        <Summary>
          <dt>Personal Name</dt><dd><A>Aelian, active 3rd century.</A></dd>
          <dt>Uniform title</dt><dd><A>Works. 1864</A></dd>
          <dt>Main title</dt><dd>Claudii Aeliani De natura animalium libri XVII, Varia historia, Epistolae fragmenta, ex recognitione Rudolphi Hercheri. Accedunt rei accipitrariae scriptores Demetrii Pepagomeni Cynosophium, Georgii Pisidae Hexaëmeron, fragmentum Herculanense.</dd>
          <dt>Published/Created</dt><dd>Lipsiae, in aedibus B. G. Teubneri, 1864-1866.</dd>
        </Summary>
        {fields.map(([name, lines]) => (
          <Field key={name}>
            <h3>{name}</h3>
            {lines.map((line, i) => <div key={i}>{line}</div>)}
          </Field>
        ))}
        <Split>
          <b>Where to Request</b>
          <IconText $gap={5}><S w={14} h={12} vb="0 0 14 12"><path d="M2 1h10l1 1v5l-1 1H8l-2 3V8H3L1 6V2z" stroke="#555" /></S><A>Request through the LC Online Catalog</A></IconText>
        </Split>
        <Holdings>
          <div>Available Online</div>
          <div>Jefferson or Adams Building Reading Rooms</div>
        </Holdings>
        <TopLink><IconText $gap={2}><CircleArrow up /><A>Top</A></IconText></TopLink>
      </Panel>
    </Record>
  );
}

function LibraryPage() {
  return (
    <Page>
      <FlagBar />
      <SiteHeader>
        <Logo href="#"><Wave w={36} h={30} c="#0a63ad" /><span>LIBRARY OF<br />CONGRESS</span></Logo>
        <HeaderButtons>
          <HeaderButton>ASK A LIBRARIAN</HeaderButton>
          <HeaderButton>DIGITAL COLLECTIONS</HeaderButton>
          <HeaderButton>LIBRARY CATALOGS</HeaderButton>
        </HeaderButtons>
        <LocSearch>
          <label htmlFor="loc">Search</label>
          <LocInput id="loc" type="text" placeholder="Search Loc.gov" />
          <GoButton type="button">GO</GoButton>
        </LocSearch>
      </SiteHeader>
      <Crumbs><a href="#">The Library of Congress</a> &gt; <a href="#">LC Online Catalog</a> &gt; LCCN Permalink</Crumbs>
      <UtilityRow>
        <UtilityLink href="#"><S w={15} h={12} vb="0 0 15 12"><path d="M4 6V1h7v5M1 6h13v5H1zM6 3h4" stroke="#33507c" strokeWidth="1.5" /><path d="M1 8h13" stroke="#33507c" /></S>Print</UtilityLink>
        <UtilityLink href="#"><S s={12} vb="0 0 12 12"><rect width="12" height="12" rx="2" fill="#e9892c" /><path d="M2 3q7 0 7 7M2 6q4 0 4 4" stroke="#fff" strokeWidth="1.3" /><circle cx="3" cy="9" r="1.2" fill="#fff" /></S>Subscribe</UtilityLink>
        <UtilityLink href="#"><S s={12} vb="0 0 12 12"><rect width="12" height="12" rx="2" fill="#139a57" /><path d="M3 5q1-3 5-2M9 7q-1 3-5 2" stroke="#fff" strokeWidth="1.5" /><path d="M7 1l3 2-3 2zM5 7L2 9l3 2z" fill="#fff" /></S>Share/Save</UtilityLink>
      </UtilityRow>
      <CatalogBar>
        <CatalogName>LCCN Permalink</CatalogName>
        <QuickSearch>
          <QuickInput type="text" placeholder="LC Online Catalog Quick Search" aria-label="LC Online Catalog Quick Search" />
          <QuickButton type="button">Search</QuickButton>
        </QuickSearch>
        <CatalogLinks><A>Browse</A><A $visited>Advanced Search</A><A>Keyword Search</A></CatalogLinks>
      </CatalogBar>
      <Title>Claudii Aeliani De natura animalium libri XVII, Varia historia, Epistolae ...</Title>
      <Columns><Sidebar /><RecordView /></Columns>
    </Page>
  );
}

function Desktop() {
  return (
    <Desk>
      <DeskFile href="#" $side="left" $at={48} $gap={13}><FolderEdge />Catalog<br />Pendin...ldbacks</DeskFile>
      <DeskFile href="#" $side="right" $at={164} $gap={7}><SheetEdge>XLSX</SheetEdge>NameList.xlsx</DeskFile>
      <DeskFile href="#" $side="right" $at={50} $gap={15}><PhotoEdge />photo.JPG</DeskFile>
      <Dock>
        {dockApps.map(([name, running, art]) => (
          <DockItem key={name} $running={running} aria-label={name}><S s={60} vb="0 0 60 60">{art}</S></DockItem>
        ))}
        <DockDivider><S w={16} h={40} vb="0 0 16 40"><path d="M1 0l14 39" stroke="#8a8e95" strokeWidth="1.5" /></S></DockDivider>
        {dockFiles.map(([name, art]) => (
          <DockItem key={name} aria-label={name}><S s={60} vb="0 0 60 60">{art}</S></DockItem>
        ))}
      </Dock>
    </Desk>
  );
}

export default function App() {
  return (
    <Screen>
      <GlobalStyle />
      <SystemMenu />
      <BrowserWindow>
        <BrowserChrome />
        <Viewport>
          <PageArea><LibraryPage /></PageArea>
          <ScrollTrack><ScrollThumb /></ScrollTrack>
        </Viewport>
      </BrowserWindow>
      <Desktop />
    </Screen>
  );
}
